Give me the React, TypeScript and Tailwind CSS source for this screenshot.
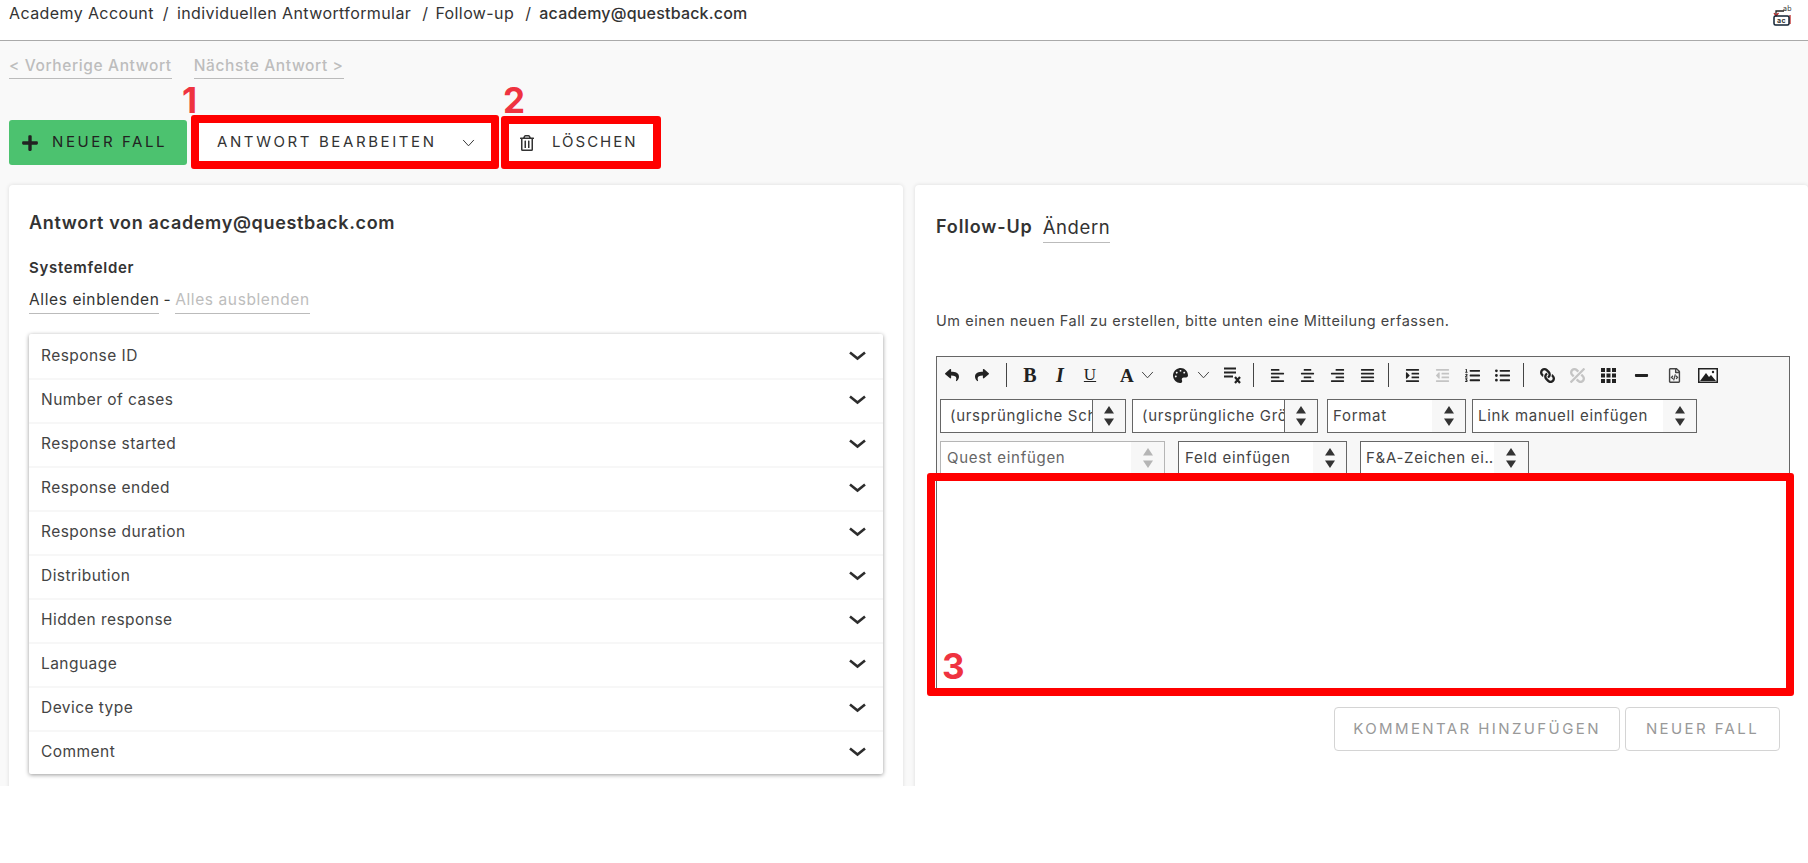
import React from 'react';
import {
  FaAlignCenter, FaAlignJustify, FaAlignLeft, FaAlignRight, FaIndent, FaLink, FaListOl, FaListUl,
  FaMinus, FaOutdent, FaPalette, FaPlus, FaRegFileCode, FaRegTrashAlt, FaReply, FaShare, FaUnlink,
} from 'react-icons/fa';

const fields = [
  'Response ID', 'Number of cases', 'Response started', 'Response ended', 'Response duration',
  'Distribution', 'Hidden response', 'Language', 'Device type', 'Comment',
];

const Chevron = () => (
  <svg width="17" height="10" viewBox="0 0 17 10" fill="none" className="text-[#2d2d2d]">
    <path d="M1 1.5 L8.5 7.5 L16 1.5" stroke="currentColor" strokeWidth="2.6" />
  </svg>
);

const ThinChevron = ({ size = 13 }: { size?: number }) => (
  <svg width={size} height={size * 0.6} viewBox="0 0 13 8" fill="none">
    <path d="M1 1 L6.5 7 L12 1" stroke="currentColor" strokeWidth="1" />
  </svg>
);

const Arrows = ({ muted = false }: { muted?: boolean }) => (
  <svg width="10" height="20" viewBox="0 0 10 20" className={muted ? 'text-[#b5b5b5]' : 'text-[#333]'}>
    <path d="M5 0 L10 7.5 H0 Z M0 12.5 H10 L5 20 Z" fill="currentColor" />
  </svg>
);

const Sep = ({ first = false }: { first?: boolean }) => (
  <div className={`mr-[8px] h-[24px] w-px bg-[#444] ${first ? 'ml-[9px]' : 'ml-[6px]'}`} />
);

const Tool = ({ children, muted = false, wide = false }: { children: React.ReactNode; muted?: boolean; wide?: boolean }) => (
  <div className={`flex h-[24px] items-center justify-center text-[15px] ${wide ? 'w-[33px]' : 'w-[30px]'} ${muted ? 'text-[#c4c4c4]' : 'text-[#222]'}`}>
    {children}
  </div>
);

const Select = ({ label, width, divider = false, muted = false, arrowW = 33, pad = 5 }: { label: string; width: number; divider?: boolean; muted?: boolean; arrowW?: number; pad?: number }) => (
  <div
    style={{ width }}
    className={`flex h-[34px] shrink-0 items-stretch border bg-white text-[15px] tracking-[0.7px] ${muted ? 'border-[#b5b5b5] text-[#666]' : 'border-[#666] text-[#444]'}`}
  >
    <div style={{ paddingLeft: pad }} className="min-w-0 flex-1 overflow-hidden whitespace-nowrap leading-[32px]">{label}</div>
    <div
      style={{ width: arrowW }}
      className={`flex shrink-0 items-center justify-center bg-[#f7f7f7] ${divider ? 'border-l border-[#666]' : ''}`}
    >
      <Arrows muted={muted} />
    </div>
  </div>
);

const Mark = ({ className }: { className: string }) => (
  <div className={`absolute rounded-[3px] border-[8px] border-[#ff0000] ${className}`} />
);

const Num = ({ n, className }: { n: string; className: string }) => (
  <span className={`absolute text-[35px] font-bold leading-none text-[#ef3340] ${className}`}>{n}</span>
);

export default function App() {
  return (
    <div className="h-[863px] overflow-hidden bg-white font-[Inter,sans-serif] text-[#333]">
      {/* breadcrumb */}
      <header className="flex h-[41px] border-b border-[#aaa] pl-[9px] pr-[15px] text-[16px] tracking-[0.4px]">
        <div className="flex h-[26px] flex-1 items-center whitespace-nowrap">
          <span>Academy Account</span>
          <span className="ml-[9px]">/</span>
          <span className="ml-[8px]">individuellen Antwortformular</span>
          <span className="ml-[11px]">/</span>
          <span className="ml-[7px]">Follow-up</span>
          <span className="ml-[11px]">/</span>
          <span className="ml-[8px] font-medium tracking-[0.2px]">academy@questback.com</span>
        </div>
        <svg width="20" height="22" viewBox="0 0 20 22" className="mt-[5px]" fill="none">
          <path d="M3 10 V6 H11" stroke="#222" strokeWidth="1.3" />
          <path d="M1 8 L3 11 L5.5 8" stroke="#b22" strokeWidth="1.3" />
          <path d="M17 10 V19" stroke="#b22" strokeWidth="1.3" />
          <rect x="1" y="11" width="15" height="9" rx="1.5" stroke="#123" strokeWidth="1.5" />
          <text x="4" y="18" fontSize="7" fontWeight="700" fill="#333">ac</text>
          <text x="10" y="6" fontSize="7" fill="#333">ab</text>
        </svg>
      </header>

      <main className="h-[745px] overflow-hidden bg-[#f9f9f9] pl-[9px]">
        {/* prev / next */}
        <div className="flex gap-[22px] pt-[13px] text-[15.5px] tracking-[0.62px] text-[#bdbdbd]">
          <a className="h-[25px] border-b border-[#bbb] font-medium">&lt; Vorherige Antwort</a>
          <a className="h-[25px] border-b border-[#bbb] font-medium">Nächste Antwort &gt;</a>
        </div>

        {/* actions */}
        <div className="mt-[41px] flex h-[45px] items-stretch text-[15px] tracking-[2.6px]">
          <button className="flex w-[178px] items-center rounded-[3px] bg-[#4cc26f] pl-[12px] text-[#222]">
            <FaPlus className="mr-[13px] text-[18px]" />
            NEUER FALL
          </button>
          <div className="relative ml-[12px] flex w-[292px] items-center justify-between bg-white pl-[18px] pr-[16px]">
            <span>ANTWORT BEARBEITEN</span>
            <ThinChevron />
            <Mark className="-inset-x-[8px] -top-[5px] -bottom-[4px]" />
            <Num n="1" className="-left-[17px] -top-[37px]" />
          </div>
          <div className="relative ml-[18px] flex w-[144px] items-center bg-white pl-[10px] tracking-[2px]">
            <FaRegTrashAlt className="mr-[17px] text-[16px]" />
            <span>LÖSCHEN</span>
            <Mark className="-inset-x-[8px] -top-[4px] -bottom-[4px]" />
            <Num n="2" className="-left-[6px] -top-[37px]" />
          </div>
        </div>

        {/* panels */}
        <div className="mt-[20px] flex gap-[12px]">
          <section className="h-[620px] w-[894px] shrink-0 rounded-t-[4px] bg-white px-[20px] pt-[27px] shadow-[0_0_4px_rgba(0,0,0,0.12)]">
            <h2 className="text-[18px] font-semibold leading-[22px] tracking-[0.66px]">Antwort von academy@questback.com</h2>
            <h3 className="mt-[24px] text-[15px] font-semibold leading-[20px] tracking-[0.7px]">Systemfelder</h3>
            <div className="mt-[11px] flex text-[15.5px] leading-[22px] tracking-[0.6px]">
              <a className="border-b border-[#bbb] pb-[2px]">Alles einblenden</a>
              <span className="mx-[4px]">-</span>
              <a className="border-b border-[#bbb] pb-[2px] text-[#bdbdbd]">Alles ausblenden</a>
            </div>
            <div className="mt-[20px] w-[854px] rounded-[2px] bg-white shadow-[0_1px_4px_rgba(0,0,0,0.4)]">
              {fields.map((f, i) => (
                <div
                  key={f}
                  className={`flex h-[44px] items-center justify-between border-t-2 pb-[2px] pl-[12px] pr-[17px] text-[15.5px] tracking-[0.45px] text-[#444] ${i ? 'border-[#f7f7f7]' : 'border-transparent'}`}
                >
                  <span>{f}</span>
                  <Chevron />
                </div>
              ))}
            </div>
          </section>

          <section className="h-[620px] flex-1 rounded-t-[4px] bg-white pl-[21px] pt-[29px] shadow-[0_0_4px_rgba(0,0,0,0.12)]">
            <div className="flex items-start">
              <h2 className="text-[18px] font-semibold leading-[26px] tracking-[0.85px]">Follow-Up</h2>
              <a className="ml-[10px] h-[29px] border-b border-[#bbb] text-[18.5px] leading-[26px] tracking-[0.6px]">Ändern</a>
            </div>
            <p className="mt-[68px] text-[14.5px] leading-[20px] tracking-[0.53px] text-[#444]">
              Um einen neuen Fall zu erstellen, bitte unten eine Mitteilung erfassen.
            </p>

            {/* editor */}
            <div className="relative mt-[25px] w-[854px] border border-[#666] bg-[#f7f7f7]">
              <div className="flex h-[42px] items-start pt-[6px]">
                <Tool><FaReply className="text-[14px]" /></Tool>
                <Tool><FaShare className="text-[14px]" /></Tool>
                <Sep first />
                <Tool><span className="font-['Liberation_Serif',serif] text-[20px] font-bold">B</span></Tool>
                <Tool><span className="font-['Liberation_Serif',serif] text-[20px] font-bold italic">I</span></Tool>
                <Tool><span className="font-['Liberation_Serif',serif] text-[17px] underline">U</span></Tool>
                <div className="ml-[15px] flex h-[24px] w-[53px] items-center gap-[7px] text-[#444]">
                  <span className="mt-[3px] font-['Liberation_Serif',serif] text-[19px] font-bold text-[#222]">A</span>
                  <ThinChevron />
                </div>
                <div className="flex h-[24px] w-[44px] items-center gap-[9px] text-[#444]">
                  <FaPalette className="text-[15px] text-[#222]" />
                  <ThinChevron />
                </div>
                <Tool>
                  <svg width="18" height="18" viewBox="0 0 18 18" fill="none" stroke="#222">
                    <path d="M1 2.5 H13 M1 6.5 H13 M1 10.5 H10" strokeWidth="2" />
                    <path d="M12 11 L17 17 M17 11 L12 17" strokeWidth="2.2" />
                  </svg>
                </Tool>
                <Sep />
                <Tool><FaAlignLeft /></Tool>
                <Tool><FaAlignCenter /></Tool>
                <Tool><FaAlignRight /></Tool>
                <Tool><FaAlignJustify /></Tool>
                <Sep />
                <Tool><FaIndent /></Tool>
                <Tool muted><FaOutdent /></Tool>
                <Tool><FaListOl /></Tool>
                <Tool><FaListUl /></Tool>
                <Sep />
                <Tool><FaLink className="-scale-x-100" /></Tool>
                <Tool muted><FaUnlink className="-scale-x-100" /></Tool>
                <Tool wide>
                  <svg width="15" height="15" viewBox="0 0 15 15" fill="#222">
                    <path d="M0 0h4v4H0z M5.5 0h4v4h-4z M11 0h4v4h-4z M0 5.5h4v4H0z M5.5 5.5h4v4h-4z M11 5.5h4v4h-4z M0 11h4v4H0z M5.5 11h4v4h-4z M11 11h4v4h-4z" />
                  </svg>
                </Tool>
                <Tool wide><FaMinus /></Tool>
                <Tool wide><FaRegFileCode className="text-[#444]" /></Tool>
                <Tool wide>
                  <svg width="20" height="15" viewBox="0 0 20 15">
                    <rect x="0.75" y="0.75" width="18.5" height="13.5" fill="#fff" stroke="#222" strokeWidth="1.5" />
                    <path d="M2 13 L8 5 L11 9 L13 7 L18 13 Z" fill="#222" />
                    <circle cx="15" cy="4" r="1.2" fill="#222" />
                  </svg>
                </Tool>
              </div>
              <div className="flex pl-[3px]">
                <Select label="(ursprüngliche Schriftart)" width={186} pad={9} divider />
                <div className="ml-[6px]"><Select label="(ursprüngliche Größe)" width={186} pad={9} divider /></div>
                <div className="ml-[9px]"><Select label="Format" width={139} /></div>
                <div className="ml-[6px]"><Select label="Link manuell einfügen" width={225} /></div>
              </div>
              <div className="mt-[8px] flex h-[32px] overflow-hidden pl-[3px]">
                <Select label="Quest einfügen" width={225} muted pad={6} />
                <div className="ml-[13px]"><Select label="Feld einfügen" width={169} pad={6} /></div>
                <div className="ml-[13px]"><Select label="F&A-Zeichen ei…" width={169} arrowW={34} /></div>
              </div>
              <div className="h-[215px] bg-white" />
              <Mark className="-left-[10px] -right-[5px] top-[116px] -bottom-[8px]" />
              <Num n="3" className="left-[5px] bottom-[4px]" />
            </div>

            <div className="mt-[18px] flex w-[844px] justify-end gap-[5px] text-[15px] tracking-[2.4px] text-[#999]">
              <button className="h-[44px] w-[286px] rounded-[4px] border border-[#d4d4d4]">KOMMENTAR HINZUFÜGEN</button>
              <button className="h-[44px] w-[155px] rounded-[4px] border border-[#d4d4d4]">NEUER FALL</button>
            </div>
          </section>
        </div>
      </main>
    </div>
  );
}
